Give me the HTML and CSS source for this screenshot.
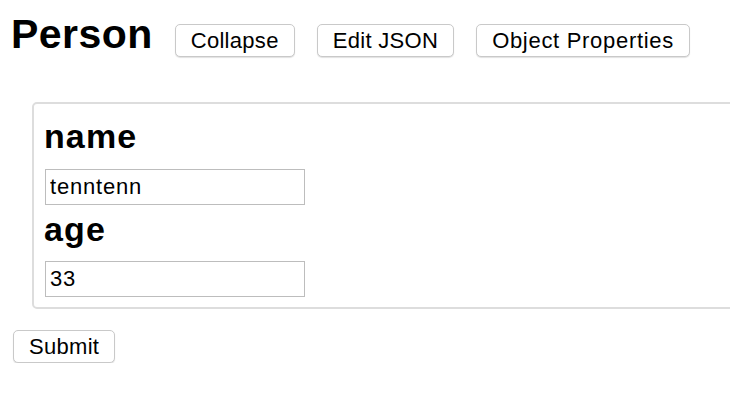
FILE: index.html
```html
<!DOCTYPE html>
<html>
<head>
<meta charset="utf-8">
<link rel="stylesheet" href="styles.css">
</head>
<body>
<div class="header">
  <h1 class="title">Person</h1>
  <button class="btn">Collapse</button>
  <button class="btn">Edit JSON</button>
  <button class="btn btn-wide">Object Properties</button>
</div>
<div class="panel">
  <h2 class="label label-first">name</h2>
  <input class="field" type="text" value="tenntenn">
  <h2 class="label">age</h2>
  <input class="field" type="text" value="33">
</div>
<button class="btn submit">Submit</button>
</body>
</html>
```
FILE: styles.css
```css
html {
  overflow: hidden;
  background: #fff;
}
body {
  margin: 0;
  padding: 10px 0 0 12px;
  font-family: "Liberation Sans", Arial, sans-serif;
  color: #000;
}
.header {
  display: flex;
  align-items: baseline;
  gap: 22px;
}
.title {
  margin: 0 0 0 -1px;
  font-size: 41px;
  line-height: 48px;
  font-weight: bold;
  letter-spacing: 0.45px;
}
.btn {
  font-family: "Liberation Sans", Arial, sans-serif;
  font-size: 22px;
  line-height: 25px;
  letter-spacing: 0.3px;
  padding: 3px 15px;
  background: #fff;
  color: #000;
  border: 1px solid #c9c9c9;
  border-radius: 5px;
  box-shadow: 0 1px 1px rgba(0, 0, 0, 0.12);
}
.btn-wide {
  letter-spacing: 0.7px;
}
.panel {
  margin: 44px 0 0 20px;
  width: calc(100% + 10px);
  border: 2px solid #dddddd;
  border-radius: 5px;
  padding: 0 0 10px 10px;
  display: flex;
  flex-direction: column;
  align-items: flex-start;
}
.label {
  margin: 5px 0 13px 0;
  font-size: 34px;
  line-height: 38px;
  font-weight: bold;
  letter-spacing: 1.1px;
}
.label-first {
  margin-top: 13px;
  margin-bottom: 14px;
}
.field {
  box-sizing: border-box;
  width: 260px;
  height: 36px;
  margin: 0 0 0 1px;
  padding: 0 4px;
  border: 1px solid #bdbdbd;
  border-radius: 0;
  font-family: "Liberation Sans", Arial, sans-serif;
  font-size: 22px;
  letter-spacing: 0.8px;
  color: #000;
  outline: none;
}
.submit {
  margin: 21px 0 0 1px;
}
```
